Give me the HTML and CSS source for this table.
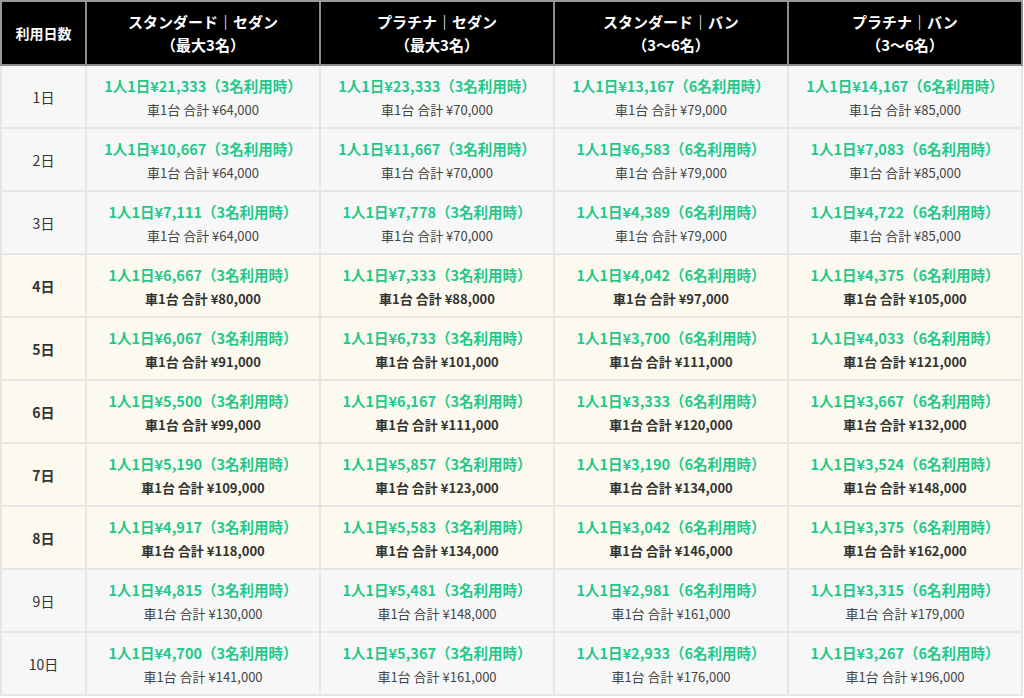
FILE: index.html
```html
<!DOCTYPE html>
<html lang="ja">
<head>
<meta charset="utf-8">
<link rel="stylesheet" href="styles.css">
</head>
<body>
<table class="price">
<thead>
<tr>
<th class="day-h">利用日数</th>
<th>スタンダード｜セダン<br>（最大3名）</th>
<th>プラチナ｜セダン<br>（最大3名）</th>
<th>スタンダード｜バン<br>（3〜6名）</th>
<th>プラチナ｜バン<br>（3〜6名）</th>
</tr>
</thead>
<tbody>
<tr><td class="day">1日</td>
<td><div class="per">1人1日¥21,333（3名利用時）</div><div class="tot">車1台 合計 ¥64,000</div></td>
<td><div class="per">1人1日¥23,333（3名利用時）</div><div class="tot">車1台 合計 ¥70,000</div></td>
<td><div class="per">1人1日¥13,167（6名利用時）</div><div class="tot">車1台 合計 ¥79,000</div></td>
<td><div class="per">1人1日¥14,167（6名利用時）</div><div class="tot">車1台 合計 ¥85,000</div></td></tr>
<tr><td class="day">2日</td>
<td><div class="per">1人1日¥10,667（3名利用時）</div><div class="tot">車1台 合計 ¥64,000</div></td>
<td><div class="per">1人1日¥11,667（3名利用時）</div><div class="tot">車1台 合計 ¥70,000</div></td>
<td><div class="per">1人1日¥6,583（6名利用時）</div><div class="tot">車1台 合計 ¥79,000</div></td>
<td><div class="per">1人1日¥7,083（6名利用時）</div><div class="tot">車1台 合計 ¥85,000</div></td></tr>
<tr><td class="day">3日</td>
<td><div class="per">1人1日¥7,111（3名利用時）</div><div class="tot">車1台 合計 ¥64,000</div></td>
<td><div class="per">1人1日¥7,778（3名利用時）</div><div class="tot">車1台 合計 ¥70,000</div></td>
<td><div class="per">1人1日¥4,389（6名利用時）</div><div class="tot">車1台 合計 ¥79,000</div></td>
<td><div class="per">1人1日¥4,722（6名利用時）</div><div class="tot">車1台 合計 ¥85,000</div></td></tr>
<tr class="hl"><td class="day">4日</td>
<td><div class="per">1人1日¥6,667（3名利用時）</div><div class="tot">車1台 合計 ¥80,000</div></td>
<td><div class="per">1人1日¥7,333（3名利用時）</div><div class="tot">車1台 合計 ¥88,000</div></td>
<td><div class="per">1人1日¥4,042（6名利用時）</div><div class="tot">車1台 合計 ¥97,000</div></td>
<td><div class="per">1人1日¥4,375（6名利用時）</div><div class="tot">車1台 合計 ¥105,000</div></td></tr>
<tr class="hl"><td class="day">5日</td>
<td><div class="per">1人1日¥6,067（3名利用時）</div><div class="tot">車1台 合計 ¥91,000</div></td>
<td><div class="per">1人1日¥6,733（3名利用時）</div><div class="tot">車1台 合計 ¥101,000</div></td>
<td><div class="per">1人1日¥3,700（6名利用時）</div><div class="tot">車1台 合計 ¥111,000</div></td>
<td><div class="per">1人1日¥4,033（6名利用時）</div><div class="tot">車1台 合計 ¥121,000</div></td></tr>
<tr class="hl"><td class="day">6日</td>
<td><div class="per">1人1日¥5,500（3名利用時）</div><div class="tot">車1台 合計 ¥99,000</div></td>
<td><div class="per">1人1日¥6,167（3名利用時）</div><div class="tot">車1台 合計 ¥111,000</div></td>
<td><div class="per">1人1日¥3,333（6名利用時）</div><div class="tot">車1台 合計 ¥120,000</div></td>
<td><div class="per">1人1日¥3,667（6名利用時）</div><div class="tot">車1台 合計 ¥132,000</div></td></tr>
<tr class="hl"><td class="day">7日</td>
<td><div class="per">1人1日¥5,190（3名利用時）</div><div class="tot">車1台 合計 ¥109,000</div></td>
<td><div class="per">1人1日¥5,857（3名利用時）</div><div class="tot">車1台 合計 ¥123,000</div></td>
<td><div class="per">1人1日¥3,190（6名利用時）</div><div class="tot">車1台 合計 ¥134,000</div></td>
<td><div class="per">1人1日¥3,524（6名利用時）</div><div class="tot">車1台 合計 ¥148,000</div></td></tr>
<tr class="hl"><td class="day">8日</td>
<td><div class="per">1人1日¥4,917（3名利用時）</div><div class="tot">車1台 合計 ¥118,000</div></td>
<td><div class="per">1人1日¥5,583（3名利用時）</div><div class="tot">車1台 合計 ¥134,000</div></td>
<td><div class="per">1人1日¥3,042（6名利用時）</div><div class="tot">車1台 合計 ¥146,000</div></td>
<td><div class="per">1人1日¥3,375（6名利用時）</div><div class="tot">車1台 合計 ¥162,000</div></td></tr>
<tr><td class="day">9日</td>
<td><div class="per">1人1日¥4,815（3名利用時）</div><div class="tot">車1台 合計 ¥130,000</div></td>
<td><div class="per">1人1日¥5,481（3名利用時）</div><div class="tot">車1台 合計 ¥148,000</div></td>
<td><div class="per">1人1日¥2,981（6名利用時）</div><div class="tot">車1台 合計 ¥161,000</div></td>
<td><div class="per">1人1日¥3,315（6名利用時）</div><div class="tot">車1台 合計 ¥179,000</div></td></tr>
<tr><td class="day">10日</td>
<td><div class="per">1人1日¥4,700（3名利用時）</div><div class="tot">車1台 合計 ¥141,000</div></td>
<td><div class="per">1人1日¥5,367（3名利用時）</div><div class="tot">車1台 合計 ¥161,000</div></td>
<td><div class="per">1人1日¥2,933（6名利用時）</div><div class="tot">車1台 合計 ¥176,000</div></td>
<td><div class="per">1人1日¥3,267（6名利用時）</div><div class="tot">車1台 合計 ¥196,000</div></td></tr>
</tbody>
</table>
</body>
</html>
```

FILE: styles.css
```css
html, body {
  margin: 0;
  padding: 0;
  background: #ffffff;
}
body {
  font-family: "Noto Sans CJK JP", "Noto Sans", sans-serif;
}
.price {
  border-collapse: separate;
  border-spacing: 0;
  table-layout: fixed;
  width: 1023px;
  border-top: 2px solid #9a9a9a;
}
.price th, .price td {
  padding: 0;
  text-align: center;
  vertical-align: middle;
  border-right: 2px solid #e6e6e6;
  border-bottom: 2px solid #e6e6e6;
}
.price th {
  background: #000000;
  color: #ffffff;
  font-weight: 700;
  font-size: 15px;
  line-height: 23px;
  height: 62px;
  width: 232px;
  border-right-color: #8c8c8c;
  border-bottom-color: #8c8c8c;
}
.price th.day-h {
  width: 83px;
  font-size: 14px;
  border-left: 2px solid #9a9a9a;
}
.price td {
  background: #f7f7f7;
  height: 61px;
}
.price td.day {
  border-left: 2px solid #e6e6e6;
}
.price tr.hl td {
  background: #fcf9ee;
}
.day {
  font-size: 14px;
  color: #333333;
}
.hl .day {
  font-weight: 700;
}
.cell-pad {
  padding-top: 3px;
}
.per {
  color: #1fc98b;
  font-weight: 700;
  font-size: 14.5px;
  line-height: 24px;
  padding-top: 2px;
}
.tot {
  color: #444444;
  font-size: 13px;
  line-height: 24px;
}
.hl .tot {
  font-weight: 700;
  color: #333333;
}
```
